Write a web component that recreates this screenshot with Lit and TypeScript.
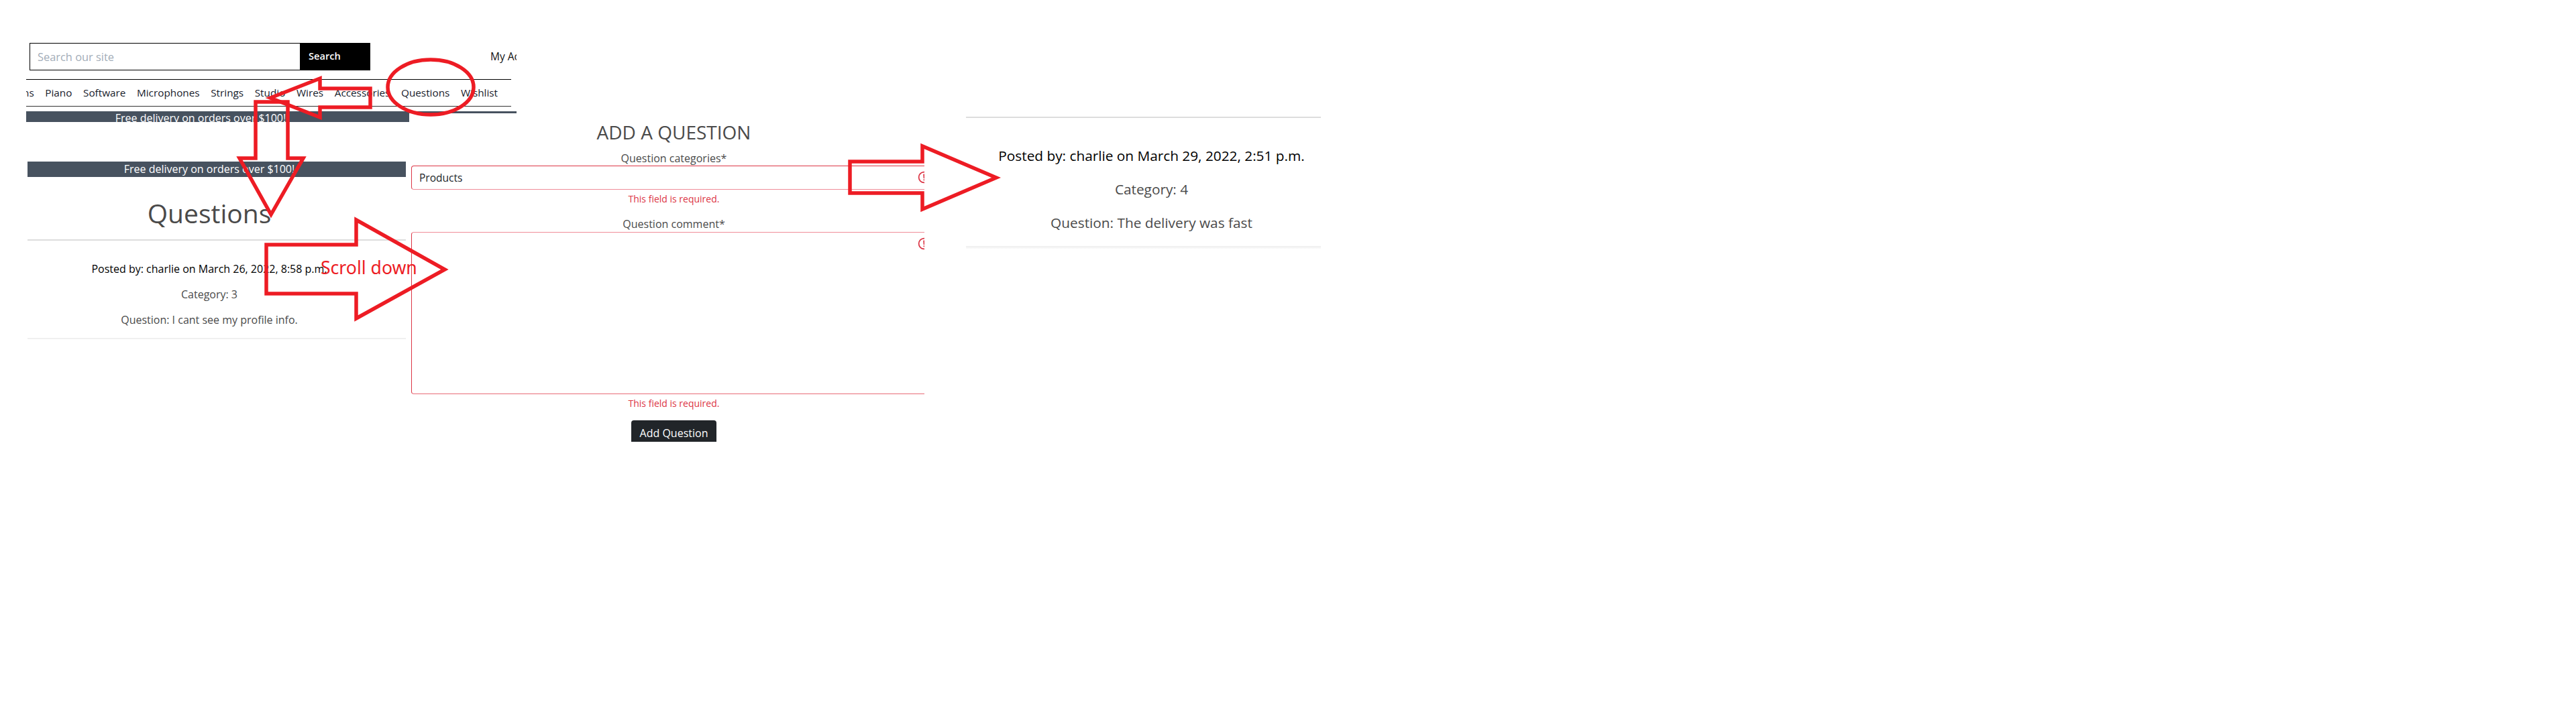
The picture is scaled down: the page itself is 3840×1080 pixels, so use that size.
import { html, css, LitElement } from 'lit';
import { customElement } from 'lit/decorators.js';

const NAV = ['ns', 'Piano', 'Software', 'Microphones', 'Strings', 'Studio', 'Wires', 'Accessories', 'Questions', 'Wishlist'];

const alertIcon = html`<svg class="alert" viewBox="0 0 12 12" fill="none" stroke="#dc3545">
  <circle cx="6" cy="6" r="4.5"></circle>
  <path stroke-linejoin="round" d="M5.8 3.6h.4L6 6.5z"></path>
  <circle cx="6" cy="8.2" r=".6" fill="#dc3545" stroke="none"></circle>
</svg>`;

@customElement('app-root')
export class AppRoot extends LitElement {
  static styles = css`
    :host {
      display: block;
      position: relative;
      width: 3840px;
      height: 1080px;
      background: #fff;
      overflow: hidden;
      font-family: 'Open Sans', 'Noto Sans', sans-serif;
      color: #4a4a4a;
    }

    /* the pasted screenshots sit on a free canvas */
    .shot {
      position: absolute;
      overflow: hidden;
      display: flex;
      flex-direction: column;
    }
    .header { left: 39px; top: 60px; width: 731px; height: 122px; }
    .list { left: 41px; top: 241px; width: 564px; height: 270px; }
    .form { left: 613px; top: 180px; width: 765px; height: 479px; }
    .detail { left: 1440px; top: 174px; width: 529px; height: 200px; }

    .search-row {
      display: flex;
      align-items: flex-start;
      height: 58px;
      flex: none;
    }
    .search {
      display: flex;
      flex: none;
      width: 508px;
      height: 41px;
      margin: 4px 0 0 5px;
      border: 1px solid #000;
      box-sizing: border-box;
    }
    .search .box {
      flex: 1;
      padding-left: 11px;
      font-size: 16.4px;
      line-height: 39px;
      color: #a3adb8;
    }
    .search .go {
      width: 104px;
      padding-left: 13px;
      box-sizing: border-box;
      background: #000;
      color: #fff;
      font-size: 14.6px;
      font-weight: 600;
      line-height: 37px;
    }
    .account {
      flex: none;
      margin: 12px 0 0 179px;
      font-size: 15.5px;
      font-weight: 500;
      line-height: 24px;
      color: #111;
      white-space: nowrap;
    }

    nav {
      display: flex;
      gap: 16.6px;
      width: 723px;
      height: 40.5px;
      flex: none;
      border-top: 1.5px solid #000;
      border-bottom: 1.5px solid #333;
      box-sizing: border-box;
      align-items: center;
      font-size: 15.3px;
      color: #17202b;
    }
    nav span:first-child { margin-left: -5px; }

    .strip { display: flex; margin-top: 7.5px; align-items: flex-start; flex: none; }
    .banner {
      background: #47525f;
      color: #fff;
      text-align: center;
      font-size: 16px;
      white-space: nowrap;
    }
    .strip .banner { width: 571px; height: 16px; line-height: 21px; overflow: hidden; padding-right: 51px; box-sizing: border-box; }
    .strip .sliver { width: 160px; height: 3px; background: #47525f; }

    .list .banner { height: 23px; line-height: 22px; padding-right: 22px; flex: none; }
    .list h1 {
      margin: 30px 22px 0 0;
      text-align: center;
      font-size: 39px;
      font-weight: 400;
      line-height: 48px;
    }
    hr { margin: 0; border: 0; border-top: 2px solid #ddd; flex: none; }
    .list hr { margin-top: 15px; }
    .post { display: flex; flex-direction: column; text-align: center; }
    .list .post { padding: 32px 22px 0 0; font-size: 16px; gap: 18px; height: 145px; box-sizing: border-box; line-height: 20px; }
    .post .by { color: #000; }
    .foot { height: 2px; background: #f0f0f0; flex: none; }

    .detail .post { padding: 43px 0 0 24px; font-size: 20.8px; gap: 24px; line-height: 26px; height: 191px; box-sizing: border-box; }
    .detail .foot { height: 4px; background: linear-gradient(#eee, #fafafa); }

    .inner {
      width: 783px;
      display: flex;
      flex-direction: column;
      align-items: center;
      flex: none;
    }
    h2 {
      margin: 0;
      font-size: 28px;
      font-weight: 400;
      line-height: 34px;
      text-transform: uppercase;
    }
    label { display: block; font-size: 16px; line-height: 20px; }
    .field {
      position: relative;
      align-self: stretch;
      box-sizing: border-box;
      border: 1px solid #dc3545;
      border-bottom-color: #f08d98;
      border-radius: 4px;
      margin-top: 1px;
      font-size: 15.5px;
      color: #212529;
    }
    .field.select { height: 36px; line-height: 34px; padding-left: 11px; }
    .field.area { height: 242px; margin-top: 2px; border-top-color: #f08d98; border-bottom-color: #e86a76; }
    .alert { position: absolute; left: 753px; width: 21px; height: 21px; }
    .select .alert { top: 6px; }
    .area .alert { top: 6px; }
    .error { font-size: 14px; font-weight: 500; line-height: 20px; color: #dc3545; margin-top: 4px; }
    .c1 { margin-top: 12px; }
    .c2 { margin-top: 17px; }
    button {
      flex: none;
      margin-top: 15px;
      width: 127px;
      height: 38px;
      border: 0;
      border-radius: 4px;
      background: #212529;
      color: #fff;
      font: inherit;
      font-size: 16px;
      font-weight: 500;
    }

    .marks { position: absolute; left: 0; top: 0; pointer-events: none; }
    .marks * { fill: none; stroke: #ed1c24; stroke-width: 5.5; }
    .scroll {
      position: absolute;
      left: 478px;
      top: 379px;
      font-family: 'Noto Sans', sans-serif;
      font-size: 26.6px;
      line-height: 40px;
      color: #ed1c24;
      white-space: nowrap;
    }
  `;

  render() {
    return html`
      <div class="shot header">
        <div class="search-row">
          <div class="search">
            <div class="box">Search our site</div>
            <div class="go">Search</div>
          </div>
          <div class="account">My Account</div>
        </div>
        <nav>${NAV.map((n) => html`<span>${n}</span>`)}</nav>
        <div class="strip">
          <div class="banner">Free delivery on orders over $100!</div>
          <div class="sliver"></div>
        </div>
      </div>

      <div class="shot list">
        <div class="banner">Free delivery on orders over $100!</div>
        <h1>Questions</h1>
        <hr />
        <div class="post">
          <div class="by">Posted by: charlie on March 26, 2022, 8:58 p.m.</div>
          <div>Category: 3</div>
          <div>Question: I cant see my profile info.</div>
        </div>
        <div class="foot"></div>
      </div>

      <div class="shot form">
        <div class="inner">
          <h2>Add a question</h2>
          <label class="c1">Question categories*</label>
          <div class="field select">Products${alertIcon}</div>
          <div class="error">This field is required.</div>
          <label class="c2">Question comment*</label>
          <div class="field area">${alertIcon}</div>
          <div class="error">This field is required.</div>
          <button>Add Question</button>
        </div>
      </div>

      <div class="shot detail">
        <hr />
        <div class="post">
          <div class="by">Posted by: charlie on March 29, 2022, 2:51 p.m.</div>
          <div>Category: 4</div>
          <div>Question: The delivery was fast</div>
        </div>
        <div class="foot"></div>
      </div>

      <svg class="marks" width="3840" height="1080" viewBox="0 0 3840 1080">
        <ellipse cx="642" cy="130" rx="64" ry="41"></ellipse>
        <path d="M403 146 L477 117 V132 H552 V160 H477 V175 Z"></path>
        <path d="M381 152 H429 V236 H452 L404 320 L357 236 H381 Z"></path>
        <path d="M397 365 H531 V328 L663 402 L531 475 V438 H397 Z"></path>
        <path d="M1267 241 H1375 V218 L1485 265 L1375 312 V288 H1267 Z"></path>
      </svg>
      <div class="scroll">Scroll down</div>
    `;
  }
}
